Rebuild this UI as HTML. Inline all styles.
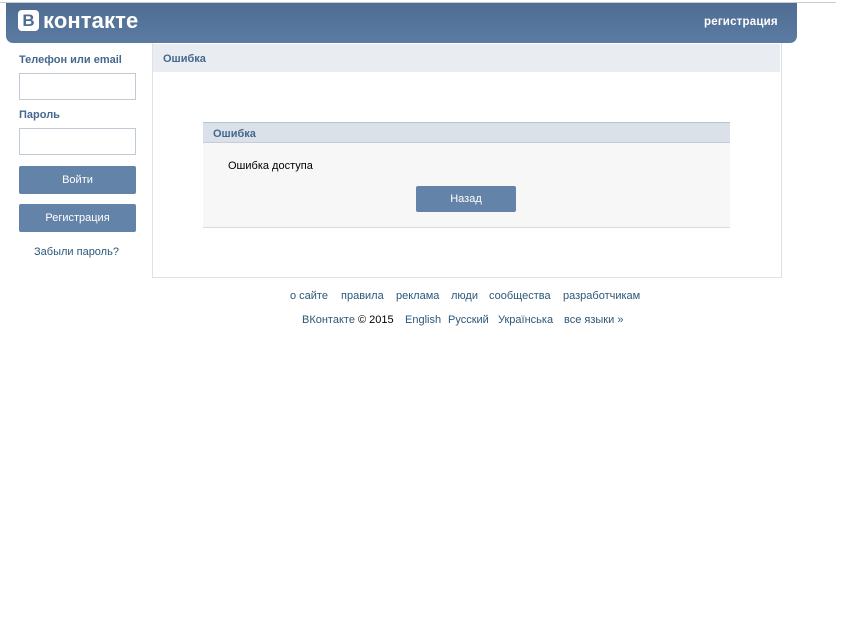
<!DOCTYPE html>
<html><head><meta charset="utf-8"><style>
body{margin:0;width:860px;height:640px;background:#fff;font-family:"Liberation Sans",sans-serif;font-size:11px;color:#000;position:relative;overflow:hidden}
.a{position:absolute;white-space:nowrap}
.t{transform:translateY(1px)}
.top{left:0;top:2px;width:836px;height:1px;background:#c8ccd2}
.hd{left:6px;top:3px;width:791px;height:40px;background:linear-gradient(#4f6d93,#5b7ba2);border-radius:0 0 7px 7px}
.logo{left:18px;top:10px;width:21px;height:21px;background:#fff;border-radius:4px;color:#4f6d93;font:bold 17px "Liberation Sans",sans-serif;text-align:center;line-height:22px}
.lt{left:43px;top:8px;color:#fff;font:bold 22px "Liberation Sans",sans-serif;letter-spacing:0.1px}
.reg{left:704px;top:16px;color:#fff;font-weight:bold;font-size:11.5px;letter-spacing:0.2px}
.lbl{left:19px;color:#45688e;font-weight:bold;font-size:11px}
.inp{left:19px;width:115px;height:25px;border:1px solid #c0cad5;background:#fff}
.btn{background:#6383a8;color:#fff;text-align:center;border-radius:2px}
.box{left:152px;top:43px;width:628px;height:234px;border:1px solid #dde2e8;border-top:none}
.bh{left:153px;top:44px;width:627px;height:28px;background:#e9edf1}
.bt{left:163px;top:53px;color:#45688e;font-weight:bold}
.inner{left:203px;top:122px;width:527px;height:104px;background:#f7f7f7;border-top:1px solid #b9c4d0;border-bottom:1px solid #dadada}
.ih{left:203px;top:123px;width:527px;height:19px;background:#dae1e8;border-bottom:1px solid #c5ced8}
.ft{color:#2b587a}
</style></head><body>
<div class="a top"></div>
<div class="a hd"></div>
<div class="a logo">В</div>
<div class="a lt">контакте</div>
<div class="a reg">регистрация</div>

<div class="a lbl" style="top:54px">Телефон или email</div>
<div class="a inp" style="top:73px"></div>
<div class="a lbl" style="top:109px">Пароль</div>
<div class="a inp" style="top:128px"></div>
<div class="a btn" style="left:19px;top:166px;width:117px;height:28px;line-height:29px">Войти</div>
<div class="a btn" style="left:19px;top:204px;width:117px;height:28px;line-height:29px">Регистрация</div>
<div class="a" style="left:0;top:246px;width:153px;text-align:center;color:#2b587a">Забыли пароль?</div>

<div class="a box"></div>
<div class="a bh"></div>
<div class="a bt">Ошибка</div>
<div class="a inner"></div>
<div class="a ih"></div>
<div class="a" style="left:213px;top:128px;color:#45688e;font-weight:bold">Ошибка</div>
<div class="a" style="left:228px;top:160px">Ошибка доступа</div>
<div class="a btn" style="left:416px;top:186px;width:100px;height:26px;line-height:27px">Назад</div>

<div class="a ft" style="left:290px;top:290px">о сайте</div>
<div class="a ft" style="left:341px;top:290px">правила</div>
<div class="a ft" style="left:396px;top:290px">реклама</div>
<div class="a ft" style="left:451px;top:290px">люди</div>
<div class="a ft" style="left:489px;top:290px">сообщества</div>
<div class="a ft" style="left:563px;top:290px">разработчикам</div>
<div class="a ft" style="left:302px;top:314px">ВКонтакте <span style="color:#000">© 2015</span></div>
<div class="a ft" style="left:405px;top:314px">English</div>
<div class="a ft" style="left:448px;top:314px">Русский</div>
<div class="a ft" style="left:498px;top:314px">Українська</div>
<div class="a ft" style="left:564px;top:314px">все языки »</div>
</body></html>
